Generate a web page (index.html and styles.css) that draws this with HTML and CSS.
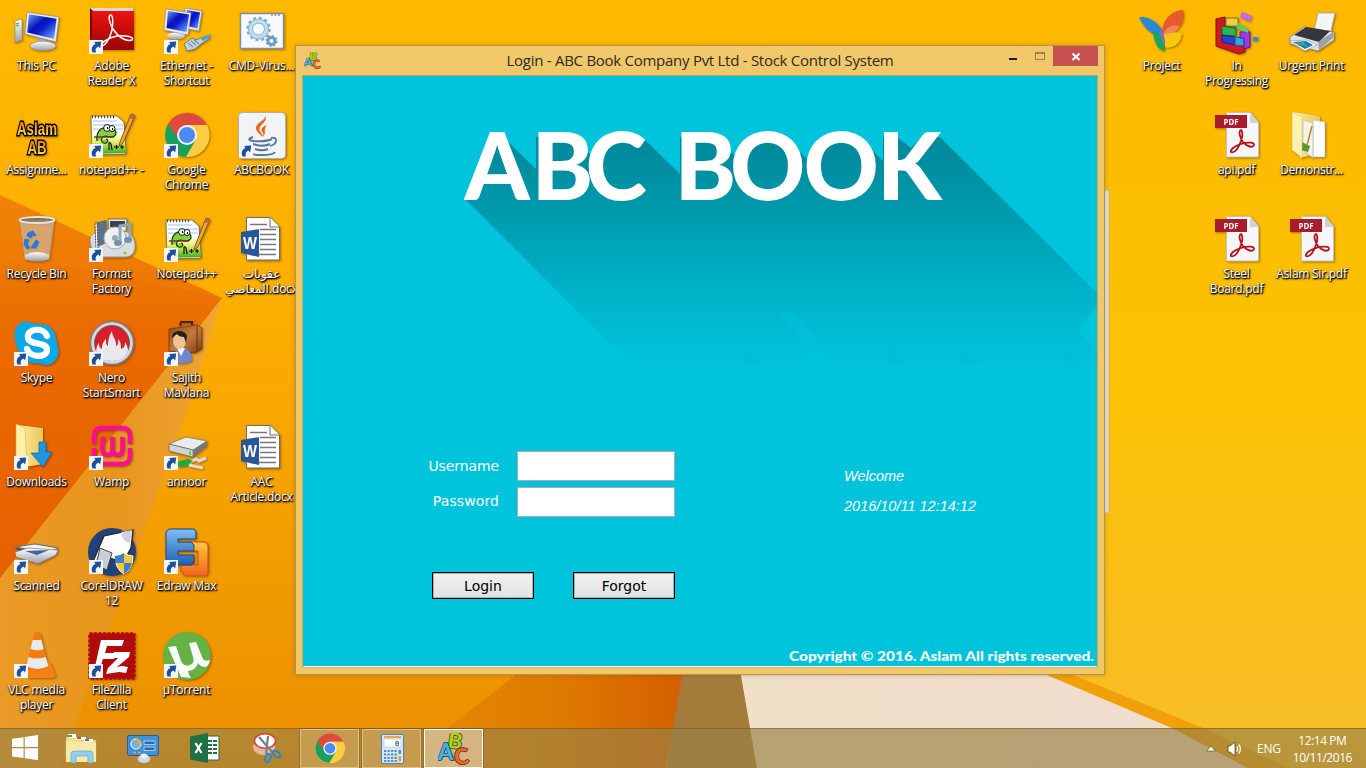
FILE: index.html
```html
<!DOCTYPE html>
<html lang="en">
<head>
<meta charset="utf-8">
<title>Login - ABC Book Company Pvt Ltd - Stock Control System</title>
<link rel="stylesheet" href="styles.css">
</head>
<body>
<svg class="sprite" aria-hidden="true">
  <defs>
    <linearGradient id="screen" x1="0" y1="0" x2="1" y2="1"><stop offset="0" stop-color="#6fa4ff"/><stop offset=".4" stop-color="#0712b8"/><stop offset=".55" stop-color="#0a1fd0"/><stop offset="1" stop-color="#7fb8ff"/></linearGradient>
    <linearGradient id="metal" x1="0" y1="0" x2="0" y2="1"><stop offset="0" stop-color="#fff"/><stop offset="1" stop-color="#9a9fa6"/></linearGradient>
    <linearGradient id="red" x1="0" y1="0" x2="0" y2="1"><stop offset="0" stop-color="#ec1410"/><stop offset="1" stop-color="#9b0503"/></linearGradient>
    <linearGradient id="folder" x1="0" y1="0" x2="1" y2="0"><stop offset="0" stop-color="#fff0a0"/><stop offset="1" stop-color="#e7c75c"/></linearGradient>
    <linearGradient id="blue" x1="0" y1="0" x2="0" y2="1"><stop offset="0" stop-color="#7ec0f5"/><stop offset="1" stop-color="#1d5fb4"/></linearGradient>
    <linearGradient id="grass" x1="0" y1="0" x2="0" y2="1"><stop offset="0" stop-color="#ffffff"/><stop offset=".4" stop-color="#e8f26a"/><stop offset="1" stop-color="#3aa81c"/></linearGradient>
    <linearGradient id="fire" x1="0" y1="0" x2="0" y2="1"><stop offset=".2" stop-color="#ff7a18"/><stop offset=".85" stop-color="#ffe23c"/></linearGradient>
    <linearGradient id="orange" x1="0" y1="0" x2="0" y2="1"><stop offset="0" stop-color="#ffc83d"/><stop offset="1" stop-color="#f0641e"/></linearGradient>
    <linearGradient id="brown" x1="0" y1="0" x2="1" y2="1"><stop offset="0" stop-color="#8a4a1c"/><stop offset=".5" stop-color="#c47a3c"/><stop offset="1" stop-color="#7c3c12"/></linearGradient>
  </defs>
  <symbol id="link" viewBox="0 0 14 14"><path d="M0 0h14v14H0z" fill="#f3f5f8"/><path d="M3.500 12.500C1.800 8.600 3.200 5.300 6.500 4.100L5.200 2l7-.4-1 7-1.700-2.200C6.800 7.400 6.100 9.500 7 12.500z" fill="#1c4f9e"/></symbol>

  <symbol id="pc" viewBox="0 0 48 48"><path d="M2 13l7-2v21l-7 3z" fill="url(#metal)" stroke="#888" stroke-width=".6"/><path d="M3 16l3-1M3 18l3-1" stroke="#3fae3f" stroke-width="1.300"/><path d="M24 30l9 2v5h-8z" fill="#aaa"/><ellipse cx="30" cy="38" rx="13" ry="4.700" fill="url(#metal)" stroke="#8a8a8a" stroke-width=".6"/><path d="M14 4l32 5-3 25-31-8z" fill="#e9ebee" stroke="#8b8f96" stroke-width=".7"/><path d="M16 6.300l27.500 4.400-2.400 20.300-26.800-6.600z" fill="url(#screen)"/></symbol>

  <symbol id="adobe" viewBox="0 0 48 48"><path d="M2 0h43l1 5H2z" fill="#d8dadd"/><path d="M2 0v33l4-4V4z" fill="#700"/><path d="M4 3h42v39H4z" fill="url(#red)"/><path d="M23 7c-4 0-1 9 2 14 5 8 13 13 19 11 3-3-6-5-15-4-9 2-16 7-16 9 3 3 9-6 11-15 1-7 1-14-1-15z" fill="none" stroke="#fff" stroke-width="1.500"/></symbol>

  <symbol id="net" viewBox="0 0 48 48"><path d="M22 0l17 3-3 20-15-3z" fill="#e2e5e9" stroke="#8b8f96" stroke-width=".6"/><path d="M24 2l13 2.500-2.500 16-12-3z" fill="url(#screen)"/><ellipse cx="13" cy="28" rx="9" ry="3.500" fill="url(#metal)"/><path d="M3 1l25 4-3 22-24-5z" fill="#e9ebee" stroke="#8b8f96" stroke-width=".6"/><path d="M5 3l21 3.500-2.500 17.500-20-4z" fill="url(#screen)"/><path d="M21 36l8-6 4 2 10-4 4 2-9 6-6 5-8 2z" fill="#bfd3dc" stroke="#5a7482" stroke-width=".8"/><path d="M38 31l9-5v3l-7 4z" fill="#43a3cf"/><path d="M25 35l5 4M28 33l5 4M31 32l5 4" stroke="#5a7482"/></symbol>

  <symbol id="cmd" viewBox="0 0 48 48"><path d="M2.500 5.500h43v35h-43z" fill="#f6f9fc" stroke="#7e8fa3" stroke-width="1.400"/><path d="M33 7h10" stroke="#58728c" stroke-dasharray="2 1.500"/><circle cx="20.500" cy="21" r="8" fill="none" stroke="#84aac9" stroke-width="5"/><circle cx="20.500" cy="21" r="11" fill="none" stroke="#84aac9" stroke-width="2.500" stroke-dasharray="2.900 2.860"/><circle cx="20.500" cy="21" r="8" fill="none" stroke="#bcdcf0" stroke-width="3.500"/><circle cx="33.500" cy="33" r="3.500" fill="none" stroke="#6d9cc0" stroke-width="3"/><circle cx="33.500" cy="33" r="5" fill="none" stroke="#6d9cc0" stroke-width="2" stroke-dasharray="1.900 2"/></symbol>

  <symbol id="aslam" viewBox="0 0 48 48"><text x="24" y="23" text-anchor="middle" textLength="40" lengthAdjust="spacingAndGlyphs" class="glyph-fire" fill="url(#fire)">Aslam</text><text x="24" y="42" text-anchor="middle" textLength="19" lengthAdjust="spacingAndGlyphs" class="glyph-fire" fill="url(#fire)">AB</text></symbol>

  <symbol id="npp" viewBox="0 0 48 48"><path d="M3 4h26l7 6 2 32-34 1z" fill="#fff" stroke="#555" stroke-width=".7"/><path d="M4 21h32l2 20-34 1z" fill="url(#grass)"/><path d="M5 9h24M5 13h30M5 17h30" stroke="#9fc3e6"/><path d="M4 5h24" stroke="#444" stroke-width="2.500" stroke-dasharray="1 2"/><path d="M9 29c-1-8 3-14 9-13 5 0 10 1 10 5s-5 5-10 3c-5 0-6 6-2 7s5-4 2-4" fill="#7fd43a" stroke="#173b0c" stroke-width="1.200"/><circle cx="19" cy="16" r="3.400" fill="#fff" stroke="#111"/><circle cx="24" cy="16.500" r="3" fill="#fff" stroke="#111"/><path d="M19 16h1M24 17h1" stroke="#000" stroke-width="2"/><path d="M6 25h20" stroke="#7a1c2c" stroke-width="1.300"/><path d="M21 38v-7q2-2 3 7M26 35h5M28.500 33v4M32 35h4M34 33v4" fill="none" stroke="#111" stroke-width="1.200"/><path d="M32 30L43 2l4 1.500L35 31l-4 3z" fill="#f0a732" stroke="#69430f" stroke-width=".8"/><path d="M43 2l4 1.500-1.500 4-4-1.500z" fill="#c4625a"/></symbol>

  <symbol id="chrome" viewBox="0 0 48 48"><circle cx="24" cy="23" r="22" fill="#fbc73b"/><path d="M24 23L5 12A22 22 0 0 0 23 45l10-17z" fill="#17a05e"/><path d="M5 12a22 22 0 0 1 39 1H24l-9 13z" fill="#dc4b3e"/><path d="M24 13h20a22 22 0 0 1-21 32l10-17z" fill="#fbcd42"/><circle cx="24" cy="23" r="10" fill="#f3f3f3"/><circle cx="24" cy="23" r="8" fill="#4a8af4"/></symbol>

  <symbol id="java" viewBox="0 0 48 48"><rect x=".5" y=".5" width="47" height="46" rx="4" fill="#f1f3f5" stroke="#a9b0b8"/><path d="M27 4c4 6-8 9-5 15 1 3 4 4 3 6-8-6-9-10-4-14 4-3 6-4 6-7zM29 13c-7 3-6 5-4 8 1 2 0 3-1 4 6-4 0-6 5-12z" fill="#e8641b"/><path d="M15 25q-8 3 1 4 12 1 18-2M15 32q9 3.500 17 0M17 37q7 2.500 13 0M11 40q1 3 12 3 13 0 14-3" fill="none" stroke="#54789a" stroke-width="2"/><path d="M33 26c7-2 7 6-1 8" fill="none" stroke="#54789a" stroke-width="1.800"/></symbol>

  <symbol id="bin" viewBox="0 0 48 48"><path d="M7 4h34l-5 39q-12 4-24 0z" fill="#e9dccb" fill-opacity=".52" stroke="#aaa" stroke-width=".8"/><path d="M12 39q12-6 24 0v4q-12 4-24 0z" fill="url(#metal)"/><ellipse cx="24" cy="4" rx="17.500" ry="3" fill="#6f6a64" fill-opacity=".6" stroke="#e5e5e5" stroke-width="1.800"/><path d="M15 17l5-2 3 5-3-1-2 3-4-2zM12 23l4 1-2 4 3 4-3 1-3-5zM19 30l4-6 3 2-3 6h-5z" fill="#2b78dc" stroke="#2b78dc"/></symbol>

  <symbol id="factory" viewBox="0 0 48 48"><path d="M2 24q0-8 12-9h22q9 1 11 13 1 11-8 13H14Q3 39 2 24z" fill="#d9dce0" stroke="#999"/><path d="M7 7l11-3 2 22-12 6z" fill="#5d7186"/><path d="M7 7l2-1 1 26-2 1z" fill="#fff" stroke="#444" stroke-dasharray="2 1"/><path d="M20 3h19l-1 12-17 4z" fill="#e8e9ec" stroke="#777"/><path d="M22 5h15v6H22z" fill="#3d4248"/><circle cx="27" cy="22" r="11" fill="#eef0f4" stroke="#aaa"/><circle cx="27" cy="22" r="3" fill="#9aa"/><path d="M32 26V10l10-2v15" fill="none" stroke="#8fa9bc" stroke-width="3"/><ellipse cx="30" cy="27" rx="4" ry="3" fill="#7590a6"/><ellipse cx="40" cy="24" rx="4" ry="3" fill="#7590a6"/><circle cx="37" cy="37" r="1.500" fill="#7ed321"/></symbol>

  <symbol id="word" viewBox="0 0 48 48"><path d="M8.500 1.500H32L41.500 11v33H8.500z" fill="#fff" stroke="#6d6d6d"/><path d="M32 1.500V11h9.500" fill="#fff" stroke="#6d6d6d"/><path d="M12 8.500h17M22 13.500h16M22 18.500h16M22 23.500h16M22 28.500h16M22 33.500h16M12 38.500h26" stroke="#777" stroke-width="1.500"/><path d="M3 16l18-3v28L3 37z" fill="#2a579a"/><text x="12" y="33" text-anchor="middle" textLength="14" lengthAdjust="spacingAndGlyphs" class="glyph-word">W</text></symbol>

  <symbol id="skype" viewBox="0 0 48 48"><path d="M4 6q7-8 17-2 22-2 23 20 4 10-2 17-7 7-16 2Q7 45 4 26-1 15 4 6z" fill="#08a9e8"/><path d="M34 16C30 6 13 9 15 18c2 8 19 3 19 12 0 8-17 8-20-1" fill="none" stroke="#fff" stroke-width="6.200" stroke-linecap="round"/></symbol>

  <symbol id="nero" viewBox="0 0 48 48"><circle cx="24" cy="23" r="21.500" fill="#d5d7dc" stroke="#7e8087" stroke-width="1.500"/><circle cx="24" cy="23" r="17.500" fill="#d7202a" stroke="#555" stroke-width=".8"/><path d="M8 31c1-6 2-7 3-8 0 4 1 5 3 6 0-6 2-8 4-10 0 4 0 6 2 7 0-7 2-12 4-15 0 6 5 9 4 15 3-1 2-5 2-7 3 3 3 6 3 10 3-1 4-3 4-7 2 3 3 6 3 9-3 7-9 10-16 10S11 38 8 31z" fill="#e8e9ec"/></symbol>

  <symbol id="user" viewBox="0 0 48 48"><path d="M17 6l1-4h11v5" fill="none" stroke="#3b2a1c" stroke-width="2"/><path d="M6 9l28-4 5 3v21l-7 4-26-2z" fill="url(#brown)" stroke="#5d2f10" stroke-width=".6"/><path d="M34 6v26" stroke="#5d2f10"/><path d="M8 42q2-14 13-14 8 2 8 13-10 5-21 1z" fill="#6f86d2"/><path d="M14 28l4 8 4-8z" fill="#fff"/><ellipse cx="16.500" cy="21" rx="6.500" ry="8" fill="#f3c193"/><path d="M9 18c-1-9 13-9 15-2l-1 7-2-6q-5 0-7-3z" fill="#26201c"/></symbol>

  <symbol id="downloads" viewBox="0 0 48 48"><path d="M4 1l26 3v36l-18 3z" fill="url(#folder)"/><path d="M3 0l9 4 2 38-7-3-4-6z" fill="#fff0ac" stroke="#dcb84e" stroke-width=".6"/><path d="M26 18h7v10h6L30 43 18 29h8z" fill="#1e95dc" stroke="#0b68ad" stroke-width=".7"/></symbol>

  <symbol id="wamp" viewBox="0 0 48 48"><path d="M6 20V13Q6 4 14 4h20q8 0 8 8v8M42 24v9q-1 7-8 7H14q-8-1-8-7v-9" fill="none" stroke="#fa0f91" stroke-width="4.500"/><path d="M14.500 13v12q0 6 5 6t5-6V13v12q0 6 5 6t5-6V13" fill="none" stroke="#fa0f91" stroke-width="4.500"/></symbol>

  <symbol id="drive" viewBox="0 0 48 48"><path d="M6 20L23 13l21 4-14 9z" fill="#e9eaec" stroke="#777" stroke-width=".7"/><path d="M6 20l24 6v7L6 27z" fill="#cfd2d6" stroke="#666" stroke-width=".7"/><path d="M30 26l14-9v5l-14 11z" fill="#74777d"/><path d="M26 27h2v4h-2z" fill="#4ae04a"/><path d="M24 40l9-5 3 2 7-3M26 41l14 3" fill="none" stroke="#ddd" stroke-width="3"/><path d="M13 38l12-3 5 2-6 5-8 1z" fill="#1da846"/></symbol>

  <symbol id="scanner" viewBox="0 0 48 48"><path d="M2 19l20-3 23 4-10 5z" fill="#f1f2f4" stroke="#6d7074"/><path d="M3 20l18 4 14 1-3 4-21-2z" fill="#28457c"/><path d="M2 24l13-4 30 2-2 5-18 9L3 29z" fill="url(#metal)" stroke="#777" stroke-width=".7"/><path d="M12 23l24-1-12 5z" fill="#3f62a5"/></symbol>

  <symbol id="corel" viewBox="0 0 48 48"><circle cx="24" cy="24" r="24" fill="#20417c"/><path d="M16 8l29-6-2 18-8 14-17-5-5 12-9-5z" fill="#fff" stroke="#222" stroke-width="1.200"/><path d="M12 20l12 5-5 17-11-5z" fill="#c8ced8" stroke="#444"/><path d="M33 4l11-2-2 13q-8-1-9-11z" fill="#ccd2dc"/><path d="M36 25q5 3 9 3 0 13-9 18-9-5-9-18 5 0 9-3z" fill="#f5c83c" stroke="#f5f5f5"/><path d="M36 25q-4 3-9 3v7h9zM36 35h8q-2 8-8 11z" fill="#3f7fc8"/></symbol>

  <symbol id="edraw" viewBox="0 0 48 48"><path d="M24 14h17q4 0 4 4v26q0 4-4 4H22l-4-5v-6h17V23H24z" fill="url(#orange)" stroke="#dc4414"/><path d="M6 1h25l2 3v7H15v3h13l3 3v6H15v4h16v8l-3 2H9l-6-6V4z" fill="url(#blue)" stroke="#1b4687"/></symbol>

  <symbol id="vlc" viewBox="0 0 48 48"><path d="M8 36l5-6h24l6 14-3 2H16z" fill="#f18214"/><path d="M24 0q3 0 4 4l8 32q-12 7-23 0l8-32q1-4 3-4z" fill="#f47b13"/><path d="M19.800 8h8.500l2.400 9q-6 2.500-13.300 0zM15.500 25q8 3 17.300 0l2.600 9q-11 6-22 0z" fill="#e7e9ea"/></symbol>

  <symbol id="filezilla" viewBox="0 0 48 48"><path d="M1.500 1.500h45v45h-45z" fill="#b30a0b" stroke="#b30a0b" stroke-width="2.500" stroke-dasharray="3 1.500"/><path d="M13 8h23l-2 6H19l-2 7h11l-2 6H15l-4 12H6zM26 20h16l-1 5-12 10 5-1 6 1-2 6-7-1-13 2 2-6 10-10h-6z" fill="#fff"/></symbol>

  <symbol id="utorrent" viewBox="0 0 48 48"><circle cx="24" cy="24" r="24" fill="#65b245"/><path d="M5 15l8-1 5 15q3 6 9 4 5-2 3-8L26 11l7-1 7 17q2 3 7 1-1 5-4 7-6 0-8-4-2 7-10 8 1 5 3 7l-10-1-6-14z" fill="#f8fbf7"/></symbol>

  <symbol id="project" viewBox="0 0 48 48"><path d="M1 9c13-1 24 10 25 19C12 28 6 19 1 9z" fill="#2a86d6"/><path d="M15 24q11 0 12 19-10-1-12-19z" fill="#12a95c"/><path d="M25 27C22 13 34 2 45 2c3 12-5 25-20 25z" fill="#e65a2c"/><path d="M28 40q-6-11-1-14 12-3 17-1-1 14-16 15z" fill="#f6c70c"/><path d="M22 22q6 4 5 17-6-8-5-17z" fill="#7c72ac"/><path d="M25 27q4-12 17-9-4 9-17 9z" fill="#f59a62" opacity=".7"/></symbol>

  <symbol id="progress" viewBox="0 0 48 48"><path d="M3 11l9-2v25l20 2v8l-6 2-23-8z" fill="#cf1820" stroke="#8c0d13"/><path d="M13 10h12v8H13z" fill="#f1cb4a" stroke="#946f10"/><path d="M9 18l14 2v8l-14-1z" fill="#32b24f" stroke="#0c6b24"/><path d="M9 27l13 2v8l-13-3z" fill="#2444d2" stroke="#122282"/><path d="M22 29l9 1v8l-9-1z" fill="#37a2ea" stroke="#125c99"/><path d="M27 24h10v15l-6 2V30h-4z" fill="#9c3be0" stroke="#5b179a"/><path d="M24 14l12 7-1 4-11-4z" fill="#65c76a"/><path d="M29 4l10 4-2 6-10-5z" fill="#c068ee"/><path d="M40 29h5v4h-5z" fill="#2593db"/></symbol>

  <symbol id="printer" viewBox="0 0 48 48"><path d="M30 5h17l-4 18H26z" fill="#f4f5f7" stroke="#9ea2a6" stroke-width=".7"/><path d="M2 29l14-10 30 5v8L30 43 2 36z" fill="#dfe1e4" stroke="#777" stroke-width=".7"/><path d="M6 27l12-8 24 4-11 11z" fill="#34383d"/><path d="M30 34l15-10v6L31 42z" fill="#9da1a6"/><path d="M1 33l18-1 10 5-12 6z" fill="#fff" stroke="#888" stroke-width=".6"/><path d="M5 34l13-1 7 4-8 4z" fill="#1c79c8"/><path d="M7 35l8-1 5 5z" fill="#3bb36c"/></symbol>

  <symbol id="pdf" viewBox="0 0 48 48"><path d="M13.500.500h24l8 10V45h-32z" fill="#f6f6f6" stroke="#c1c1c1"/><path d="M37 1v10h9" fill="#d2d2d2"/><path d="M2 3h32v13H2z" fill="#a91c2b"/><text x="18" y="13.300" text-anchor="middle" textLength="15" lengthAdjust="spacingAndGlyphs" class="glyph-pdf">PDF</text><path d="M28 18c-3 1-1 8 2 12 4 5 10 6 11 3s-7-3-13-1c-7 2-11 6-10 8 4 2 8-5 10-11 2-6 2-9 0-11z" fill="none" stroke="#b51322" stroke-width="1.800"/></symbol>

  <symbol id="demo" viewBox="0 0 48 48"><path d="M5 0l27 4v37l-20 5z" fill="url(#folder)"/><path d="M25 8l12 2v35H25z" fill="#fff" stroke="#bbb" stroke-width=".6"/><path d="M15 8l10 3v35l-10-8z" fill="#f2f3f2" stroke="#aaa" stroke-width=".6"/><path d="M14 30l8 4-2 6-7-2z" fill="#56992c"/><path d="M24 14l-5 19" stroke="#c7871b" stroke-width="1.600"/><path d="M4 0l10 5v41L4 38z" fill="#fff1b0" stroke="#dfc263" stroke-width=".6"/></symbol>

  <symbol id="abc" viewBox="0 0 32 32"><text x="9.500" y="15.500" transform="rotate(8 16 10)" class="glyph-abc b">B</text><text x="0" y="27" class="glyph-abc a">A</text><text x="16.500" y="31.500" transform="rotate(-8 22 26)" class="glyph-abc c">C</text></symbol>
</svg>

<main class="desktop">
  <svg class="wallpaper" viewBox="0 0 1366 768" preserveAspectRatio="none" aria-hidden="true">
    <defs>
      <linearGradient id="w1" x1="0" y1="0" x2="0" y2="1"><stop offset="0" stop-color="#ffb900"/><stop offset=".4" stop-color="#fcae00"/><stop offset="1" stop-color="#eb8e00"/></linearGradient>
      <linearGradient id="w2" x1="0" y1="0" x2="0" y2="1"><stop offset="0" stop-color="#fdb900"/><stop offset=".5" stop-color="#fbc203"/><stop offset="1" stop-color="#f7bd2a"/></linearGradient>
      <linearGradient id="w3" x1="0" y1="0" x2="0" y2="1"><stop offset="0" stop-color="#f28708"/><stop offset=".35" stop-color="#ea6b00"/><stop offset="1" stop-color="#e66000"/></linearGradient>
      <linearGradient id="w4" x1="0" y1="0" x2="1" y2="0"><stop offset="0" stop-color="#ea9a26"/><stop offset=".5" stop-color="#e8951c"/><stop offset="1" stop-color="#f0a536"/></linearGradient>
      <linearGradient id="w5" x1="0" y1="0" x2="1" y2="0"><stop offset="0" stop-color="#e78b00"/><stop offset=".55" stop-color="#df7a00"/><stop offset="1" stop-color="#d45d00"/></linearGradient>
      <linearGradient id="w6" x1="0" y1="0" x2="1" y2="0"><stop offset="0" stop-color="#f1e0c8"/><stop offset="1" stop-color="#f1dcd0"/></linearGradient>
    </defs>
    <path d="M0 0h700v768H0z" fill="url(#w1)"/>
    <path d="M700 0h666v768H700z" fill="url(#w2)"/>
    <path d="M222 298L0 578v190h60L187 410z" fill="url(#w4)"/>
    <path d="M0 195l222 103-89 112L0 578z" fill="url(#w3)"/>
    <path d="M0 195l222 103L100 272 0 258z" fill="#ef7d05" opacity=".5"/>
    <path d="M560 640L448 728l-50 40h268l24-128z" fill="url(#w5)"/>
    <path d="M688 640l-15 88-6 40h90l-22-128z" fill="#a37b3b"/>
    <path d="M735 640h230l82 35 125 53 76 40H757z" fill="url(#w6)"/>
    <path d="M965 640h40l68 35 130 53 85 40h-40l-76-40-125-53z" fill="#f0a107"/>
  </svg>

  <ul class="icons icons-left">
    <li><svg class="pic"><use href="#pc"/></svg><span>This PC</span></li>
    <li><svg class="pic"><use href="#aslam"/></svg><span>Assignme...</span></li>
    <li><svg class="pic"><use href="#bin"/></svg><span>Recycle Bin</span></li>
    <li><svg class="pic"><use href="#skype"/></svg><svg class="link"><use href="#link"/></svg><span>Skype</span></li>
    <li><svg class="pic"><use href="#downloads"/></svg><svg class="link"><use href="#link"/></svg><span>Downloads</span></li>
    <li><svg class="pic"><use href="#scanner"/></svg><svg class="link"><use href="#link"/></svg><span>Scanned</span></li>
    <li><svg class="pic"><use href="#vlc"/></svg><svg class="link"><use href="#link"/></svg><span>VLC media<br>player</span></li>
    <li><svg class="pic"><use href="#adobe"/></svg><svg class="link"><use href="#link"/></svg><span>Adobe<br>Reader X</span></li>
    <li><svg class="pic"><use href="#npp"/></svg><svg class="link"><use href="#link"/></svg><span>notepad++ -</span></li>
    <li><svg class="pic"><use href="#factory"/></svg><svg class="link"><use href="#link"/></svg><span>Format<br>Factory</span></li>
    <li><svg class="pic"><use href="#nero"/></svg><svg class="link"><use href="#link"/></svg><span>Nero<br>StartSmart</span></li>
    <li><svg class="pic"><use href="#wamp"/></svg><svg class="link"><use href="#link"/></svg><span>Wamp</span></li>
    <li><svg class="pic"><use href="#corel"/></svg><svg class="link"><use href="#link"/></svg><span>CorelDRAW<br>12</span></li>
    <li><svg class="pic"><use href="#filezilla"/></svg><svg class="link"><use href="#link"/></svg><span>FileZilla<br>Client</span></li>
    <li><svg class="pic"><use href="#net"/></svg><svg class="link"><use href="#link"/></svg><span>Ethernet -<br>Shortcut</span></li>
    <li><svg class="pic"><use href="#chrome"/></svg><svg class="link"><use href="#link"/></svg><span>Google<br>Chrome</span></li>
    <li><svg class="pic"><use href="#npp"/></svg><svg class="link"><use href="#link"/></svg><span>Notepad++</span></li>
    <li><svg class="pic"><use href="#user"/></svg><svg class="link"><use href="#link"/></svg><span>Sajith<br>Mavlana</span></li>
    <li><svg class="pic"><use href="#drive"/></svg><svg class="link"><use href="#link"/></svg><span>annoor</span></li>
    <li><svg class="pic"><use href="#edraw"/></svg><svg class="link"><use href="#link"/></svg><span>Edraw Max</span></li>
    <li><svg class="pic"><use href="#utorrent"/></svg><svg class="link"><use href="#link"/></svg><span>µTorrent</span></li>
    <li><svg class="pic"><use href="#cmd"/></svg><span>CMD-Virus...</span></li>
    <li><svg class="pic"><use href="#java"/></svg><svg class="link"><use href="#link"/></svg><span>ABCBOOK</span></li>
    <li><svg class="pic"><use href="#word"/></svg><span>عقوبات<br>المعاصي.docx</span></li>
    <li class="row5"><svg class="pic"><use href="#word"/></svg><span>AAC<br>Article.docx</span></li>
  </ul>

  <ul class="icons icons-right">
    <li><svg class="pic"><use href="#project"/></svg><span>Project</span></li>
    <li><svg class="pic"><use href="#progress"/></svg><span>In<br>Progressing</span></li>
    <li><svg class="pic"><use href="#printer"/></svg><span>Urgent Print</span></li>
    <li class="second"><svg class="pic"><use href="#pdf"/></svg><span>api.pdf</span></li>
    <li><svg class="pic"><use href="#demo"/></svg><span>Demonstr...</span></li>
    <li class="second"><svg class="pic"><use href="#pdf"/></svg><span>Steel<br>Board.pdf</span></li>
    <li><svg class="pic"><use href="#pdf"/></svg><span>Aslam Sir.pdf</span></li>
  </ul>

  <div class="behind"></div>

  <section class="window">
    <header class="titlebar">
      <svg class="app-icon"><use href="#abc"/></svg>
      <h1>Login - ABC Book Company Pvt Ltd - Stock Control System</h1>
      <div class="controls">
        <svg class="min" viewBox="0 0 27 20"><path d="M10 13h8" stroke="#1c1c1c" stroke-width="2"/></svg>
        <svg class="max" viewBox="0 0 27 20"><path d="M9.500 7.500h9v6h-9z" fill="none" stroke="#9f834c"/><path d="M9 7h10" stroke="#9f834c" stroke-width="2"/></svg>
        <svg class="close" viewBox="0 0 45 20"><path d="M19.500 7.500l7 6.500M26.500 7.500l-7 6.500" stroke="#fff" stroke-width="2"/></svg>
      </div>
    </header>
    <div class="client">
      <svg class="artwork" viewBox="303 76 794 590">
        <defs><linearGradient id="shade" gradientUnits="userSpaceOnUse" x1="0" y1="133" x2="0" y2="368"><stop offset="0" stop-color="#008798"/><stop offset=".16" stop-color="#008fa1"/><stop offset=".33" stop-color="#0099ad"/><stop offset=".62" stop-color="#00afc5"/><stop offset="1" stop-color="#00c4dc"/></linearGradient></defs>
        <path d="M466 200L499 133 536 169V137H568L579 143 591 155 622 136 643 138 680 174V137H712L724 144 735 156 766 137 792 144 807 159 840 137 866 144 883 161V137H897L911 148 922 137H940L1097 293V305L1078 330 1097 352V368H634z" fill="url(#shade)"/>
        <path d="M779 314Q785 311 795 313L842 368H808L806 343z" fill="#00c4dc" opacity=".45"/>
        <path d="M746 342L768 364Q748 368 738 363 748 355 746 342zM889 341L912 364Q892 368 882 363 891 355 889 341zM962 342L985 364Q965 368 955 363 964 355 962 342zM1063 343L1084 364H1063z" fill="#00b9d0" opacity=".3"/>
        <text y="199.500" x="464.500 531.500 585.500 650 674.500 730 803.500 877" class="headline">ABC BOOK</text>
        <text x="789" y="661" textLength="305" lengthAdjust="spacingAndGlyphs" class="copyright">Copyright © 2016. Aslam All rights reserved.</text>
      </svg>
      <form class="login">
        <label for="user-name">Username</label><input id="user-name" type="text">
        <label for="pass" class="pass">Password</label><input id="pass" type="password">
        <div class="actions"><button type="button">Login</button><button type="button">Forgot</button></div>
      </form>
      <div class="status"><p>Welcome</p><p>2016/10/11 12:14:12</p></div>
    </div>
  </section>

  <footer class="taskbar">
    <div class="start"><svg viewBox="0 0 28 28"><path d="M0 4.500l12-1.700V13H0zM13.200 2.600L27 .6V13H13.200zM0 14.200h12v10.200L0 22.700zM13.200 14.200H27v12.400l-13.800-2z" fill="#fff"/></svg></div>
    <div class="task"><svg viewBox="0 0 32 32"><path d="M1 4h9l2 3h19v20l-30 2z" fill="#f3dd86" stroke="#c8a844" stroke-width=".7"/><path d="M3 1h8v4H3z" fill="#fff"/><path d="M3 2h4v2H3z" fill="#3cb043"/><path d="M11 4h10v3H11z" fill="#fff"/><path d="M12 4h4v2h-4z" fill="#cf4b2f"/><path d="M19 6h9v3h-9z" fill="#fff"/><path d="M20 6h4v2h-4z" fill="#3a7fc4"/><path d="M1 8l30 2v19H1z" fill="#f9e9a2"/><path d="M6 30V21q0-3 4-3h14q4 0 4 3v9h-5v-7H11v7z" fill="#8fd0f2" stroke="#5aa7d2" stroke-width=".7"/></svg></div>
    <div class="task"><svg viewBox="0 0 32 32"><rect x=".5" y="2.500" width="31" height="20" rx="1.500" fill="#3f92d9" stroke="#235f9c"/><circle cx="9" cy="11" r="5" fill="#6cb3ea" stroke="#fff"/><path d="M9 11V5.500a5.500 5.500 0 0 1 5 6z" fill="#f1a229"/><path d="M17 8h11v3.500H17zM17 14h11v3.500H17z" fill="#2b6cb4" stroke="#d7ecfa" stroke-width=".7"/><path d="M6 19.500h3M11 19.500h3" stroke="#f4a02c" stroke-width="1.500"/><ellipse cx="17" cy="26" rx="6.500" ry="4.200" fill="#d4d8dc" stroke="#888" stroke-width=".6"/><ellipse cx="17" cy="23" rx="3.500" ry="2.500" fill="#eef0f2"/></svg></div>
    <div class="task"><svg viewBox="0 0 32 32"><path d="M15 3h15v24H15z" fill="#fff" stroke="#1e7145"/><path d="M19 7h4v2h-4zM24 7h4v2h-4zM19 11h4v2h-4zM24 11h4v2h-4zM19 15h4v2h-4zM24 15h4v2h-4zM19 19h4v2h-4zM24 19h4v2h-4z" fill="#1e7145"/><path d="M1 3.500L19 0v30L1 26.500z" fill="#1e7145"/><path d="M6.500 10l6 10M12.500 10l-6 10" stroke="#fff" stroke-width="2.200"/></svg></div>
    <div class="task"><svg viewBox="0 0 32 32"><ellipse cx="13" cy="14" rx="11" ry="8" fill="#e7b7a2"/><ellipse cx="14" cy="8" rx="10.500" ry="7.300" fill="#fff" stroke="#d64034" stroke-width="1.500"/><path d="M8 4l14 16M17 3l-2 18" stroke="#737f8a" stroke-width="2.200"/><ellipse cx="17" cy="25" rx="2.600" ry="4.300" transform="rotate(20 17 25)" fill="none" stroke="#2b87c8" stroke-width="2"/><ellipse cx="25.500" cy="21" rx="2.500" ry="4.300" transform="rotate(-50 25.500 21)" fill="none" stroke="#2b87c8" stroke-width="2"/></svg></div>
    <div class="task open"><svg viewBox="0 0 48 48"><use href="#chrome"/></svg></div>
    <div class="task open"><svg viewBox="0 0 32 32"><rect x="5.500" y="1.500" width="22" height="29" rx="1.500" fill="#d5e8f5" stroke="#4a86b6"/><path d="M8 3h17v2H8z" fill="#f3a440"/><path d="M8 6h17v8H8z" fill="#fff" stroke="#a6c0d4" stroke-width=".6"/><text x="19" y="13" class="glyph-calc">0</text><path d="M8 18h13M8 21.500h13M8 25h13M8 28h13" stroke="#5b8cb3" stroke-width="2.200" stroke-dasharray="2.300 1.200"/><path d="M22.500 17h2.500v4h-2.500z" fill="#5b8cb3"/><path d="M22.500 23h2.500v5.500h-2.500z" fill="#f09b2e"/></svg></div>
    <div class="task open active"><svg><use href="#abc"/></svg></div>
    <div class="tray">
      <svg class="up" viewBox="0 0 9 6"><path d="M.5 5.300L4.500.8l4 4.500z" fill="#fff" stroke="#6b5a33" stroke-width=".7"/></svg>
      <svg class="vol" viewBox="0 0 16 16"><path d="M1 5h2l5-4v14l-5-4H1z" fill="#fff" stroke="#4e452c" stroke-width=".8"/><path d="M9.700 5.500q2 2.500 0 5M11.700 3.500q3.500 4.500 0 9" fill="none" stroke="#fff" stroke-width="1.300"/></svg>
      <span class="lang">ENG</span>
      <div class="clock"><span>12:14 PM</span><span>10/11/2016</span></div>
    </div>
  </footer>
</main>
</body>
</html>
```
FILE: styles.css
```css
* { box-sizing: border-box; }
body { margin: 0; font-family: "Open Sans", "Noto Sans", "DejaVu Sans", sans-serif; }
.sprite { position: absolute; width: 0; height: 0; }
.desktop { position: relative; width: 1366px; height: 768px; overflow: hidden; }
.wallpaper { position: absolute; inset: 0; width: 1366px; height: 768px; }

.icons { position: absolute; top: 0; margin: 0; padding: 0; list-style: none; display: grid; }
.icons-left { left: -1px; grid-auto-flow: column; grid-auto-columns: 75px; grid-template-rows: repeat(7, 104px); }
.icons-right { right: 17px; grid-template-columns: repeat(3, 75px); grid-auto-rows: 104px; }
.icons-right .second { grid-column: 2; }
.icons-left .row5 { grid-row: 5; }
.icons li { position: relative; padding-top: 8px; display: flex; flex-direction: column; align-items: center; }
.pic { width: 48px; height: 48px; filter: drop-shadow(1px 1px 1px rgba(60, 30, 0, .45)); overflow: visible; }
.link { position: absolute; left: 15px; top: 40px; width: 14px; height: 14px; }
.icons span { margin-top: 2px; font-size: 12px; line-height: 15px; letter-spacing: -.25px; text-align: center; white-space: nowrap; color: #fff; text-shadow: 1px 1px 2px #000, 0 1px 2px rgba(0, 0, 0, .9), 1px 1px 1px rgba(0, 0, 0, .8); }

.glyph-fire { font: 900 19px "Liberation Sans", sans-serif; stroke: #000; stroke-width: 3px; paint-order: stroke; }
.glyph-word { font: 700 17px "Liberation Sans", sans-serif; fill: #fff; }
.glyph-pdf { font: 700 9px "Open Sans", sans-serif; fill: #fff; }
.glyph-abc { font: 900 22px "Lato", sans-serif; stroke: #333; stroke-width: 1.4px; paint-order: stroke; }
.glyph-abc.a { fill: #38b6f2; }
.glyph-abc.b { fill: #a4d80c; }
.glyph-abc.c { fill: #f8621c; }
.glyph-calc { font: 7px "DejaVu Sans Mono", monospace; fill: #224; }

.behind { position: absolute; left: 1100px; top: 190px; width: 9px; height: 323px; background: #e4e5ec; border: 1px solid #c9c9cf; }
.window { position: absolute; left: 295px; top: 45px; width: 810px; height: 630px; display: flex; flex-direction: column; padding: 0 6px 6px; background: #f0c869; border: 1px solid #b3954e; box-shadow: 0 0 4px rgba(90, 50, 0, .3); }
.titlebar { flex: 0 0 29px; display: grid; grid-template-columns: 100px 1fr 100px; align-items: start; }
.app-icon { width: 17px; height: 17px; margin: 6px 0 0 2px; overflow: visible; }
.titlebar h1 { margin: 0; padding: 4px 0 0; font-size: 15px; line-height: 21px; font-weight: 400; letter-spacing: -.27px; text-align: center; white-space: nowrap; color: #2c2b26; }
.controls { display: flex; justify-content: flex-end; }
.min, .max { width: 27px; height: 20px; }
.close { width: 45px; height: 20px; background: #c75050; }
.client { flex: 1; position: relative; display: flex; background: #00c4dc; border: 1px solid #c8a457; border-bottom-color: #d6b469; box-shadow: inset 0 -1px #fff; }
.artwork { position: absolute; left: 0; top: 0; width: 794px; height: 590px; }
.headline { font: 900 93px "Lato", sans-serif; fill: #fff; }
.copyright { font: 900 13.500px "Lato", sans-serif; fill: #fff; }
.login { position: relative; margin: 375px 0 0 126px; width: 246px; height: 148px; display: grid; grid-template-columns: 70px 158px; column-gap: 18px; row-gap: 6px; grid-template-rows: 30px 30px 76px; }
.login label { align-self: center; justify-self: end; font: 14px "DejaVu Sans", sans-serif; letter-spacing: -.1px; white-space: nowrap; color: #fff; }
.login .pass { padding-bottom: 2px; letter-spacing: .1px; }
.login input { width: 158px; height: 30px; border: 1px solid #abadb3; background: #fff; padding: 2px 6px; }
.actions { grid-column: 1 / 3; align-self: end; display: flex; justify-content: space-between; padding-left: 3px; }
.actions button { width: 102px; height: 27px; padding: 0; border: 1px solid #000; box-shadow: inset 0 0 0 1px #adadad; background: linear-gradient(#f0f0f0, #e3e3e3); font: 14px "DejaVu Sans", sans-serif; color: #000; }
.status { position: relative; margin: 385px 0 0 169px; font: italic 14.500px/30px "Liberation Sans", sans-serif; color: #fff; white-space: nowrap; }
.status p { margin: 0; }

.taskbar { position: absolute; left: 0; right: 0; bottom: 0; height: 40px; display: flex; background: rgba(153, 130, 70, .655); border-top: 1px solid rgba(110, 90, 40, .6); color: #fff; font-size: 12px; }
.start { width: 50px; padding: 5px 0 0 12px; }
.start svg { width: 27px; height: 28px; }
.task { width: 58px; margin: 0 4px 0 0; display: grid; place-items: center; }
.start + .task { margin-left: 2px; }
.task svg { width: 32px; height: 32px; overflow: visible; }
.task.open { width: 59px; margin-right: 3px; border: 1px solid rgba(240, 215, 165, .65); background: rgba(225, 195, 140, .35); outline: 1px solid rgba(90, 65, 20, .35); height: 39px; }
.task.active { border-color: #fff; background: rgba(235, 215, 185, .6); }
.tray { margin-left: auto; display: flex; align-items: center; padding-right: 14px; letter-spacing: -.2px; }
.up { width: 10px; height: 7px; margin-right: 11px; }
.vol { width: 16px; height: 16px; margin-right: 14px; }
.lang { margin-right: 12px; }
.clock { display: flex; flex-direction: column; align-items: center; line-height: 17px; letter-spacing: -.45px; }
```
